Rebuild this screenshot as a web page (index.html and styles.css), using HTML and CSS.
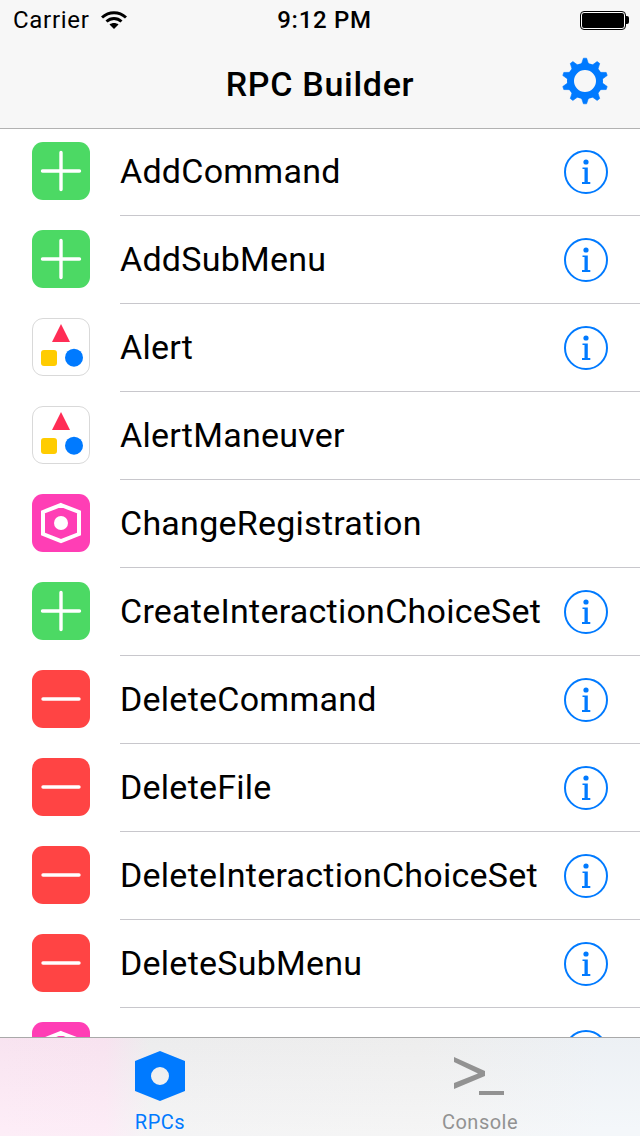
FILE: index.html
```html
<!DOCTYPE html>
<html lang="en">
<head>
  <meta charset="UTF-8" />
  <title>RPC Builder</title>
  <meta name="viewport" content="width=device-width, initial-scale=1">
  <link rel="stylesheet" href="styles.css">
</head>
<body>
  <svg class="defs" width="0" height="0">
    <defs>
      <symbol id="add" viewBox="0 0 58 58">
        <rect width="58" height="58" rx="11" fill="#4cd964"/>
        <path d="M10.500 29H47.500M29 10.500V47.500" stroke="#fff" stroke-width="3.400" stroke-linecap="round"/>
      </symbol>
      <symbol id="del" viewBox="0 0 58 58">
        <rect width="58" height="58" rx="11" fill="#ff4444"/>
        <path d="M11 29H47" stroke="#fff" stroke-width="3.400" stroke-linecap="round"/>
      </symbol>
      <symbol id="ui" viewBox="0 0 58 58">
        <rect x=".5" y=".5" width="57" height="57" rx="10.500" fill="#fff" stroke="#d9d9d9"/>
        <path d="M29 6L38 24H20Z" fill="#ff2d55"/>
        <rect x="9" y="32" width="16" height="16" rx="3" fill="#ffcc00"/>
        <circle cx="42" cy="39.700" r="9" fill="#007aff"/>
      </symbol>
      <symbol id="reg" viewBox="0 0 58 58">
        <rect width="58" height="58" rx="11" fill="#ff3eb5"/>
        <path d="M29 11L47 18V40L29 47L11 40V18Z" fill="none" stroke="#fff" stroke-width="4"/>
        <circle cx="29" cy="29" r="7" fill="#fff"/>
      </symbol>
      <symbol id="info" viewBox="0 0 44 44">
        <circle cx="22" cy="22" r="21" fill="none" stroke="#007aff" stroke-width="2"/>
        <circle cx="22" cy="12" r="2.600" fill="#007aff"/>
        <path d="M18.500 17.500H23.800V32H26.300V34H18V32H20.500V19H18.500Z" fill="#007aff"/>
      </symbol>
    </defs>
  </svg>

  <div class="app">
    <header class="top">
      <div class="status">
        <div class="status-left">
          <span>Carrier</span>
          <svg class="wifi" width="26" height="18" viewBox="0 0 26 18">
            <path d="M1 6.500C8 0 18 0 25 6.500" fill="none" stroke="#000" stroke-width="3"/>
            <path d="M5.500 10.500C10 6.500 16 6.500 20.500 10.500" fill="none" stroke="#000" stroke-width="3"/>
            <path d="M13 18L8.500 13.500C11 11.500 15 11.500 17.500 13.500Z" fill="#000"/>
          </svg>
        </div>
        <div class="status-time">9:12 PM</div>
        <div class="battery"><div class="battery-body"></div><div class="battery-tip"></div></div>
      </div>
      <div class="nav">
        <h1 class="nav-title">RPC Builder</h1>
        <svg class="gear" width="46" height="48" viewBox="-23 -24 46 48">
          <g fill="#007aff" stroke="#007aff" stroke-width=".6" stroke-linejoin="round">
            <path d="M-1.600 -22.800H1.600L4.200 -15H-4.200Z"/>
            <path d="M-1.600 -22.800H1.600L4.200 -15H-4.200Z" transform="rotate(36)"/>
            <path d="M-1.600 -22.800H1.600L4.200 -15H-4.200Z" transform="rotate(72)"/>
            <path d="M-1.600 -22.800H1.600L4.200 -15H-4.200Z" transform="rotate(108)"/>
            <path d="M-1.600 -22.800H1.600L4.200 -15H-4.200Z" transform="rotate(144)"/>
            <path d="M-1.600 -22.800H1.600L4.200 -15H-4.200Z" transform="rotate(180)"/>
            <path d="M-1.600 -22.800H1.600L4.200 -15H-4.200Z" transform="rotate(216)"/>
            <path d="M-1.600 -22.800H1.600L4.200 -15H-4.200Z" transform="rotate(252)"/>
            <path d="M-1.600 -22.800H1.600L4.200 -15H-4.200Z" transform="rotate(288)"/>
            <path d="M-1.600 -22.800H1.600L4.200 -15H-4.200Z" transform="rotate(324)"/>
          </g>
          <circle r="14.500" fill="none" stroke="#007aff" stroke-width="7"/>
        </svg>
      </div>
    </header>

    <main class="list">
      <div class="row"><svg class="row-icon"><use href="#add"/></svg><div class="row-main"><span class="row-name">AddCommand</span><svg class="info"><use href="#info"/></svg></div></div>
      <div class="row"><svg class="row-icon"><use href="#add"/></svg><div class="row-main"><span class="row-name">AddSubMenu</span><svg class="info"><use href="#info"/></svg></div></div>
      <div class="row"><svg class="row-icon"><use href="#ui"/></svg><div class="row-main"><span class="row-name">Alert</span><svg class="info"><use href="#info"/></svg></div></div>
      <div class="row"><svg class="row-icon"><use href="#ui"/></svg><div class="row-main"><span class="row-name">AlertManeuver</span></div></div>
      <div class="row"><svg class="row-icon"><use href="#reg"/></svg><div class="row-main"><span class="row-name">ChangeRegistration</span></div></div>
      <div class="row"><svg class="row-icon"><use href="#add"/></svg><div class="row-main"><span class="row-name">CreateInteractionChoiceSet</span><svg class="info"><use href="#info"/></svg></div></div>
      <div class="row"><svg class="row-icon"><use href="#del"/></svg><div class="row-main"><span class="row-name">DeleteCommand</span><svg class="info"><use href="#info"/></svg></div></div>
      <div class="row"><svg class="row-icon"><use href="#del"/></svg><div class="row-main"><span class="row-name">DeleteFile</span><svg class="info"><use href="#info"/></svg></div></div>
      <div class="row"><svg class="row-icon"><use href="#del"/></svg><div class="row-main"><span class="row-name">DeleteInteractionChoiceSet</span><svg class="info"><use href="#info"/></svg></div></div>
      <div class="row"><svg class="row-icon"><use href="#del"/></svg><div class="row-main"><span class="row-name">DeleteSubMenu</span><svg class="info"><use href="#info"/></svg></div></div>
      <div class="row"><svg class="row-icon"><use href="#reg"/></svg><div class="row-main"><span class="row-name">DiagnosticMessage</span><svg class="info"><use href="#info"/></svg></div></div>
    </main>

    <footer class="tabs">
      <div class="tab tab-active">
        <svg width="52" height="52" viewBox="0 0 52 52">
          <path fill-rule="evenodd" d="M26 1L51 11V41L26 51L1 41V11ZM26 17A9 9 0 1 0 26 35A9 9 0 1 0 26 17Z" fill="#007aff"/>
        </svg>
        <span>RPCs</span>
      </div>
      <div class="tab">
        <svg width="52" height="52" viewBox="0 0 52 52">
          <path d="M0 7L31 21V26L0 39V33L24 23.500L0 12Z" fill="#929292"/>
          <rect x="25" y="41" width="25" height="4" fill="#929292"/>
        </svg>
        <span>Console</span>
      </div>
    </footer>
  </div>
</body>
</html>
```

FILE: styles.css
```css
* {
  box-sizing: border-box;
}
body {
  margin: 0;
  background: #fff;
  font-family: Roboto, 'Liberation Sans', sans-serif;
  color: #000;
}
.defs {
  display: block;
  height: 0;
}
.app {
  width: 640px;
  height: 1136px;
  display: flex;
  flex-direction: column;
  overflow: hidden;
}
.top {
  height: 129px;
  flex: none;
  background: #f7f7f7;
  border-bottom: 1px solid #b2b2b2;
}
.status {
  height: 40px;
  padding: 0 11px 0 13px;
  display: grid;
  grid-template-columns: 1fr auto 1fr;
  align-items: center;
  font-size: 24px;
  letter-spacing: .7px;
}
.status-left {
  display: flex;
  align-items: center;
  gap: 11px;
}
.status-time {
  font-weight: 500;
  margin-left: 7px;
}
.battery {
  justify-self: end;
  display: flex;
  align-items: center;
}
.battery-body {
  width: 44px;
  height: 17px;
  background: #000;
  border: 1px solid #fff;
  outline: 1px solid #000;
  border-radius: 3px;
}
.battery-tip {
  width: 3px;
  height: 8px;
  background: #000;
  border-radius: 0 2px 2px 0;
  margin-left: 1px;
}
.nav {
  height: 88px;
  padding: 0 32px;
  display: grid;
  grid-template-columns: 1fr auto 1fr;
  align-items: center;
}
.nav-title {
  grid-column: 2;
  margin: 0;
  font-size: 34px;
  font-weight: 500;
  letter-spacing: .7px;
}
.gear {
  justify-self: end;
  margin-bottom: 6px;
}
.list {
  flex: 1;
  min-height: 0;
  overflow: hidden;
}
.row {
  height: 88px;
  display: flex;
  align-items: center;
  padding-left: 32px;
}
.row:first-child {
  margin-top: -1px;
}
.row-icon {
  width: 58px;
  height: 58px;
  flex: none;
  margin-right: 30px;
  margin-bottom: 2px;
}
.row-main {
  flex: 1;
  height: 88px;
  display: flex;
  align-items: center;
  justify-content: space-between;
  padding-right: 32px;
  padding-bottom: 2px;
  border-bottom: 1px solid #c8c7cc;
}
.row-name {
  font-size: 34px;
  letter-spacing: .25px;
}
.info {
  width: 44px;
  height: 44px;
  margin-top: 2px;
}
.tabs {
  height: 99px;
  flex: none;
  display: flex;
  justify-content: center;
  border-top: 1px solid #a9a9a9;
  background:
    linear-gradient(180deg, rgba(0, 0, 0, .02), rgba(255, 255, 255, .25)),
    linear-gradient(90deg, #fde8f5 0, #fce7f4 105px, #f1f1f2 150px, #f2f2f2 420px, #f1f5f9 600px);
}
.tab {
  width: 320px;
  padding-top: 12px;
  display: flex;
  flex-direction: column;
  align-items: center;
  color: #929292;
  font-size: 20px;
  letter-spacing: .5px;
}
.tab-active {
  color: #007aff;
}
.tab span {
  margin-top: 8px;
}
```
